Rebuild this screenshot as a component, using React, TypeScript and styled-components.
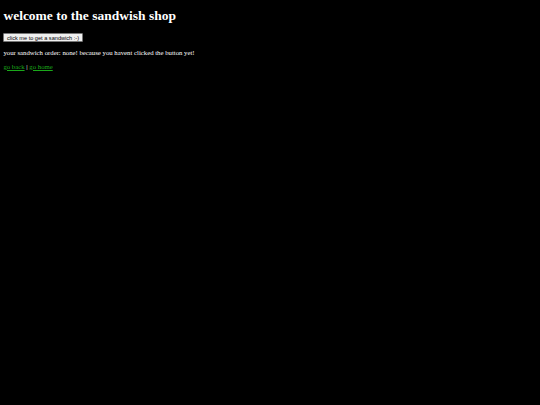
import React, { useState } from 'react';
import styled, { createGlobalStyle } from 'styled-components';

const GlobalStyle = createGlobalStyle`
  html, body {
    background: #000;
  }
  body {
    margin: 3.4px;
    color: #fff;
    font-family: "Liberation Serif", "Times New Roman", serif;
    font-size: 6.75px;
  }
`;

const Title = styled.h1`
  font-size: 13.5px;
  font-weight: bold;
  margin: 5px 0 9px;
`;

const OrderButton = styled.button`
  font-family: "Liberation Sans", Arial, sans-serif;
  font-size: 5.6px;
  padding: 0.5px 2.5px;
  background: #efefef;
  color: #000;
  border: 1px solid #767676;
  border-radius: 1px;
  cursor: pointer;
`;

const Text = styled.p`
  margin: 6.75px 0;
`;

const Link = styled.a`
  color: #1aa81a;
  text-decoration: underline;
`;

export default function App() {
  const [order, setOrder] = useState('');

  return (
    <>
      <GlobalStyle />
      <Title>welcome to the sandwish shop</Title>
      <OrderButton onClick={() => setOrder('a sandwich!')}>click me to get a sandwich :-)</OrderButton>
      <Text>
        your sandwich order: {order || "none! because you havent clicked the button yet!"}
      </Text>
      <Text>
        <Link href="#">go back</Link> | <Link href="#">go home</Link>
      </Text>
    </>
  );
}
